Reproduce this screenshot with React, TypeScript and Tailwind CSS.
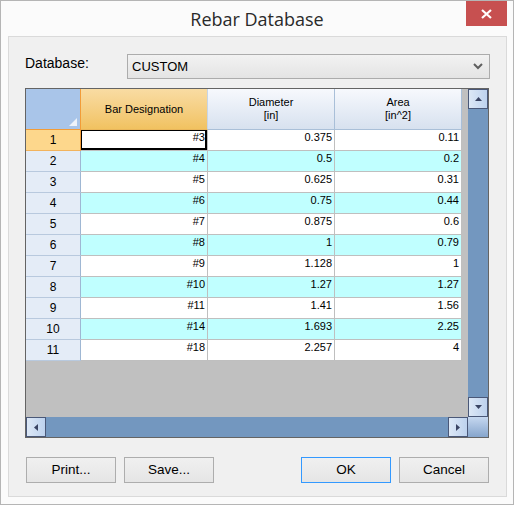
import React from 'react'

const ROWS: [string, string, string][] = [
  ['#3', '0.375', '0.11'],
  ['#4', '0.5', '0.2'],
  ['#5', '0.625', '0.31'],
  ['#6', '0.75', '0.44'],
  ['#7', '0.875', '0.6'],
  ['#8', '1', '0.79'],
  ['#9', '1.128', '1'],
  ['#10', '1.27', '1.27'],
  ['#11', '1.41', '1.56'],
  ['#14', '1.693', '2.25'],
  ['#18', '2.257', '4'],
]

type Dir = 'up' | 'down' | 'left' | 'right'

const ARROWS: Record<Dir, string> = {
  up: '0,4 3.5,0 7,4',
  down: '0,0 3.5,4 7,0',
  left: '4,0 0,3.5 4,7',
  right: '0,0 4,3.5 0,7',
}

function ScrollButton({ dir }: { dir: Dir }) {
  const vertical = dir === 'up' || dir === 'down'
  return (
    <div className="flex h-[20px] w-[20px] shrink-0 items-center justify-center border border-[#4a5878] bg-gradient-to-r from-[#dde8f6] to-[#bdd2ee]">
      <svg width={vertical ? 7 : 4} height={vertical ? 4 : 7} viewBox={vertical ? '0 0 7 4' : '0 0 4 7'}>
        <polygon points={ARROWS[dir]} fill="#3a4463" />
      </svg>
    </div>
  )
}

function DialogButton({ label, focused }: { label: string; focused?: boolean }) {
  return (
    <button
      type="button"
      className={`flex h-[26px] w-[90px] items-center justify-center border bg-gradient-to-b from-[#f0f0f0] to-[#e5e5e5] text-[13.5px] text-black ${
        focused ? 'border-[#3399ff]' : 'border-[#adadad]'
      }`}
    >
      {label}
    </button>
  )
}

export default function App() {
  return (
    <div className="flex h-[505px] w-[514px] flex-col border border-[#b5b5b5] bg-[#fbfbfb] font-['Liberation_Sans',Arial,sans-serif] text-black">
      {/* Title bar */}
      <div className="grid h-[35px] shrink-0 grid-cols-[1fr_auto_1fr]">
        <div />
        <div className="pt-[5px] font-['Open_Sans','Noto_Sans',sans-serif] text-[18px] leading-[26px] text-[#2a2a2a]">
          Rebar Database
        </div>
        <div className="flex justify-end pr-[6px]">
          <div className="flex h-[25px] w-[41px] items-center justify-center bg-[#c75050]">
            <svg width="11" height="10" viewBox="0 0 11 10">
              <path d="M1 1 L10 9 M10 1 L1 9" stroke="#fff" strokeWidth="2.2" />
            </svg>
          </div>
        </div>
      </div>

      {/* Client panel */}
      <div className="ml-[7px] mr-[6px] flex h-[461px] flex-col border border-[#dadada] bg-[#f0f0f0] pl-[16px] pt-[17px]">
        <div className="flex h-[25px] items-start">
          <span className="w-[102px] pt-[1px] text-[14px] leading-[16px]">Database:</span>
          <div className="flex h-[25px] w-[363px] items-center justify-between border border-[#acacac] bg-gradient-to-b from-[#f2f2f2] to-[#e4e4e4] pl-[4px] pr-[6px]">
            <span className="text-[13px]">CUSTOM</span>
            <svg width="10" height="7" viewBox="0 0 10 7">
              <polyline points="1,1 5,5 9,1" fill="none" stroke="#5f5f5f" strokeWidth="2" />
            </svg>
          </div>
        </div>

        {/* Grid */}
        <div className="mt-[9px] flex h-[350px] w-[464px] flex-col border border-[#646464] text-[11px]">
          <div className="flex h-[328px]">
            <div className="w-[442px] bg-[#c0c0c0]">
              {/* Header */}
              <div className="flex h-[41px]">
                <div className="flex w-[55px] items-end justify-end border-r border-b border-r-[#f29c38] border-b-[#f29c38] bg-[#a9c5e9] p-[3px]">
                  <svg width="8" height="8" viewBox="0 0 8 8">
                    <polygon points="8,0 8,8 0,8" fill="#eef3fa" />
                  </svg>
                </div>
                <div className="flex w-[127px] items-center justify-center border-r border-b border-r-[#c7d5e6] border-b-[#e9b65a] bg-gradient-to-b from-[#f9dca3] to-[#f1c260]">
                  Bar Designation
                </div>
                <div className="flex w-[127px] flex-col items-center justify-center border-r border-b border-[#a9bfd8] bg-gradient-to-b from-[#f7f9fd] to-[#d7e1ef] text-center leading-[13px]">
                  <span>Diameter</span>
                  <span>[in]</span>
                </div>
                <div className="flex w-[127px] flex-col items-center justify-center border-r border-b border-[#a9bfd8] bg-gradient-to-b from-[#f7f9fd] to-[#d7e1ef] text-center leading-[13px]">
                  <span>Area</span>
                  <span>[in^2]</span>
                </div>
              </div>

              {/* Rows */}
              {ROWS.map((row, i) => {
                const selected = i === 0
                const cellBg = i % 2 === 1 ? 'bg-[#c0ffff]' : 'bg-white'
                return (
                  <div key={i} className="flex h-[21px]">
                    <div
                      className={`flex w-[55px] items-center justify-center border-r border-b text-[12px] ${
                        selected
                          ? 'border-r-[#f29c38] border-b-[#f2b35d] bg-[#fdd78c]'
                          : 'border-r-[#9fb7d3] border-b-[#b8c9de] bg-[#e4ecf7]'
                      }`}
                    >
                      {i + 1}
                    </div>
                    {row.map((value, j) => (
                      <div
                        key={j}
                        className={`w-[127px] border-r border-b border-[#bfbfbf] pr-[2px] text-right leading-[14px] ${cellBg} ${
                          selected && j === 0 ? 'shadow-[inset_1px_1px_0_#000,inset_-2px_-2px_0_#000]' : ''
                        }`}
                      >
                        {value}
                      </div>
                    ))}
                  </div>
                )
              })}
            </div>

            {/* Vertical scrollbar */}
            <div className="flex w-[20px] flex-col bg-[#7397bf]">
              <ScrollButton dir="up" />
              <div className="flex-1" />
              <ScrollButton dir="down" />
            </div>
          </div>

          {/* Horizontal scrollbar */}
          <div className="flex h-[20px] bg-[#7397bf]">
            <ScrollButton dir="left" />
            <div className="flex-1" />
            <ScrollButton dir="right" />
            <div className="w-[20px] bg-gradient-to-b from-[#c6d8f0] to-[#86a5cc]" />
          </div>
        </div>

        {/* Buttons */}
        <div className="mt-[19px] flex w-[464px] justify-between pl-[1px]">
          <div className="flex gap-[8px]">
            <DialogButton label="Print..." />
            <DialogButton label="Save..." />
          </div>
          <div className="flex gap-[8px]">
            <DialogButton label="OK" focused />
            <DialogButton label="Cancel" />
          </div>
        </div>
      </div>
    </div>
  )
}
